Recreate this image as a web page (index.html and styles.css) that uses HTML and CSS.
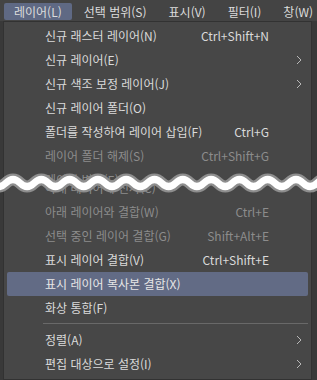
FILE: index.html
```html
<!DOCTYPE html>
<html lang="ko">
<head>
    <meta charset="UTF-8">
    <meta name="viewport" content="width=device-width, initial-scale=1.0">
    <title>레이어 메뉴</title>
    <link rel="stylesheet" href="styles.css">
</head>
<body>
    <div class="screen">
        <nav class="menubar">
            <span class="menubar-item active">레이어(L)</span>
            <span class="menubar-item">선택 범위(S)</span>
            <span class="menubar-item">표시(V)</span>
            <span class="menubar-item">필터(I)</span>
            <span class="menubar-item">창(W)</span>
        </nav>

        <div class="dropdown">
            <div class="item">
                <span class="label">신규 래스터 레이어(N)</span>
                <span class="shortcut">Ctrl+Shift+N</span>
            </div>
            <div class="item">
                <span class="label">신규 레이어(E)</span>
                <span class="shortcut"></span>
                <svg class="arrow" viewBox="0 0 6 10"><polyline points="1,1 5,5 1,9"/></svg>
            </div>
            <div class="item">
                <span class="label">신규 색조 보정 레이어(J)</span>
                <span class="shortcut"></span>
                <svg class="arrow" viewBox="0 0 6 10"><polyline points="1,1 5,5 1,9"/></svg>
            </div>
            <div class="item">
                <span class="label">신규 레이어 폴더(O)</span>
            </div>
            <div class="item">
                <span class="label">폴더를 작성하여 레이어 삽입(F)</span>
                <span class="shortcut">Ctrl+G</span>
            </div>
            <div class="item disabled">
                <span class="label">레이어 폴더 해제(S)</span>
                <span class="shortcut">Ctrl+Shift+G</span>
            </div>

            <!-- the list is cut here; the wave marks the gap -->
            <div class="cut">
                <div class="cut-top">
                    <div class="item disabled">
                        <span class="label">레이어 변환(E)</span>
                    </div>
                </div>
                <div class="cut-bottom">
                    <div class="item disabled">
                        <span class="label">아래 레이어에 전사(C)</span>
                    </div>
                </div>
            </div>

            <div class="item disabled">
                <span class="label">아래 레이어와 결합(W)</span>
                <span class="shortcut">Ctrl+E</span>
            </div>
            <div class="item disabled">
                <span class="label">선택 중인 레이어 결합(G)</span>
                <span class="shortcut">Shift+Alt+E</span>
            </div>
            <div class="item">
                <span class="label">표시 레이어 결합(V)</span>
                <span class="shortcut">Ctrl+Shift+E</span>
            </div>
            <div class="item hover">
                <span class="label">표시 레이어 복사본 결합(X)</span>
            </div>
            <div class="item">
                <span class="label">화상 통합(F)</span>
            </div>
            <div class="separator"></div>
            <div class="item">
                <span class="label">정렬(A)</span>
                <span class="shortcut"></span>
                <svg class="arrow" viewBox="0 0 6 10"><polyline points="1,1 5,5 1,9"/></svg>
            </div>
            <div class="item">
                <span class="label">편집 대상으로 설정(I)</span>
                <span class="shortcut"></span>
                <svg class="arrow" viewBox="0 0 6 10"><polyline points="1,1 5,5 1,9"/></svg>
            </div>
        </div>

        <svg class="wave" viewBox="0 0 317 28" width="317" height="28">
            <path class="wave-rim" d="M -22.4 14 Q -15.3 7 -8.25 14 T 5.9 14 T 20.05 14 T 34.2 14 T 48.35 14 T 62.5 14 T 76.65 14 T 90.8 14 T 104.95 14 T 119.1 14 T 133.25 14 T 147.4 14 T 161.55 14 T 175.7 14 T 189.85 14 T 204 14 T 218.15 14 T 232.3 14 T 246.45 14 T 260.6 14 T 274.75 14 T 288.9 14 T 303.05 14 T 317.2 14 T 331.35 14"/>
            <path class="wave-band" d="M -22.4 14 Q -15.3 7 -8.25 14 T 5.9 14 T 20.05 14 T 34.2 14 T 48.35 14 T 62.5 14 T 76.65 14 T 90.8 14 T 104.95 14 T 119.1 14 T 133.25 14 T 147.4 14 T 161.55 14 T 175.7 14 T 189.85 14 T 204 14 T 218.15 14 T 232.3 14 T 246.45 14 T 260.6 14 T 274.75 14 T 288.9 14 T 303.05 14 T 317.2 14 T 331.35 14"/>
        </svg>
    </div>
</body>
</html>
```

FILE: styles.css
```css
body {
    margin: 0;
    background-color: #393939;
    font-family: "Noto Sans CJK KR", "Noto Sans", sans-serif;
    font-size: 12px;
    color: #dadada;
    overflow: hidden;
}
.screen {
    position: relative;
    width: 317px;
    height: 380px;
    overflow: hidden;
}
.menubar {
    display: flex;
    gap: 2px;
    height: 21px;
    padding: 3px 4px 0;
    box-sizing: border-box;
    background-color: #444444;
    white-space: nowrap;
}
.menubar-item {
    height: 17px;
    line-height: 17px;
    padding: 0 10px;
    border-radius: 2px;
    color: #dcdcdc;
}
.menubar-item.active {
    background-color: #5f6984;
}
.dropdown {
    margin-left: 3px;
    width: 309px;
    height: 359px;
    box-sizing: border-box;
    padding-top: 2px;
    background-color: #474747;
    border: 1px solid #323232;
}
.item {
    display: grid;
    grid-template-columns: 1fr auto 39px;
    align-items: center;
    height: 24px;
    line-height: 24px;
    margin: 0 3px;
    padding-left: 38px;
    border-radius: 2px;
    white-space: nowrap;
}
.item.disabled {
    color: #8c8c8c;
}
.item.hover {
    background-color: #626b85;
    color: #e6e6e6;
}
.shortcut {
    text-align: right;
}
.arrow {
    width: 6px;
    height: 10px;
    justify-self: end;
    margin-right: 6px;
    fill: none;
    stroke: #b8b8b8;
    stroke-width: 1;
}
.separator {
    height: 1px;
    margin: 3px 3px 4px 39px;
    background-color: #696969;
}
.cut {
    height: 32px;
}
.cut-top {
    height: 16px;
    overflow: hidden;
}
.cut-bottom {
    height: 16px;
    overflow: hidden;
    display: flex;
    flex-direction: column;
    justify-content: flex-end;
}
.cut-bottom .item {
    flex-shrink: 0;
}
.wave {
    position: absolute;
    top: 169px;
    left: 0;
}
.wave path {
    fill: none;
}
.wave-rim {
    stroke: #8e8e8e;
    stroke-width: 12;
}
.wave-band {
    stroke: #ffffff;
    stroke-width: 7;
}
```
